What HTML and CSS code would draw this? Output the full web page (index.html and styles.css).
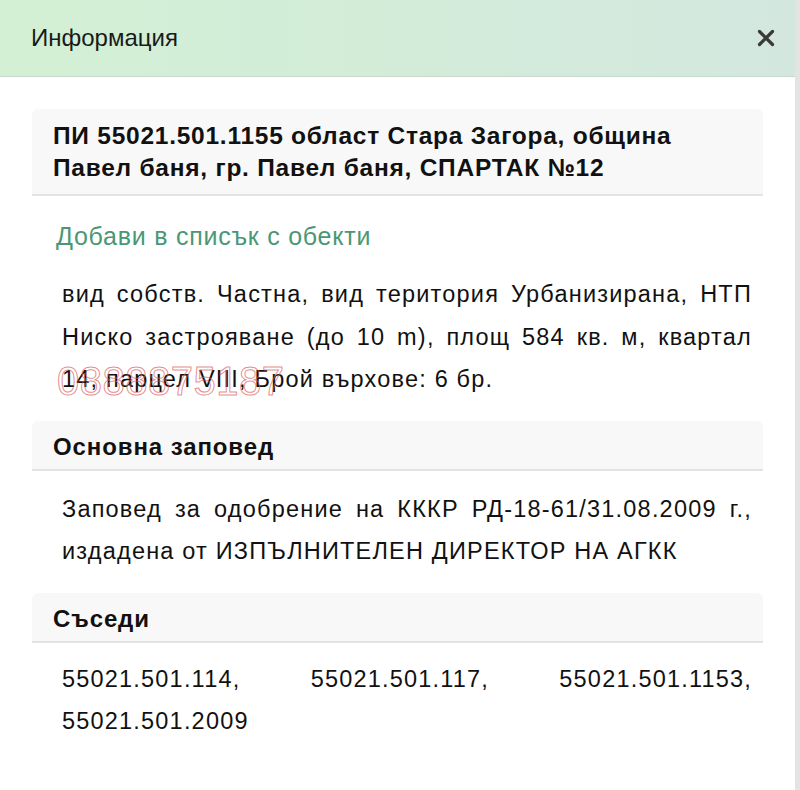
FILE: index.html
```html
<!DOCTYPE html>
<html lang="bg">
<head>
<meta charset="utf-8">
<title>Информация</title>
<link rel="stylesheet" href="styles.css">
</head>
<body>
<div class="modal">
  <header class="modal-header">
    <h1 class="modal-title">Информация</h1>
    <button class="close" aria-label="Затвори">
      <svg width="18" height="18" viewBox="0 0 18 18"><path d="M2.5 2.5 L15.5 15.5 M15.5 2.5 L2.5 15.5" stroke="#3a3a3a" stroke-width="3.2" stroke-linecap="round"/></svg>
    </button>
  </header>
  <div class="modal-body">
    <div class="box-head title-head">ПИ 55021.501.1155 област Стара Загора, община Павел баня, гр. Павел баня, СПАРТАК №12</div>
    <a class="add-link">Добави в списък с обекти</a>
    <div class="wm-wrap">
      <p class="text">вид собств. Частна, вид територия Урбанизирана, НТП Ниско застрояване (до 10 m), площ 584 кв. м, квартал 14, парцел VIII, Брой върхове: 6 бр.</p>
      <span class="watermark">0888875187</span>
    </div>
    <div class="box-head section-head">Основна заповед</div>
    <p class="text">Заповед за одобрение на КККР РД-18-61/31.08.2009 г., издадена от ИЗПЪЛНИТЕЛЕН ДИРЕКТОР НА АГКК</p>
    <div class="box-head section-head">Съседи</div>
    <p class="text neighbours">55021.501.114, 55021.501.117, 55021.501.1153, 55021.501.2009</p>
  </div>
</div>
</body>
</html>
```
FILE: styles.css
```css
html, body {
  margin: 0;
  padding: 0;
  background: #ffffff;
}
body {
  font-family: "Liberation Sans", Arial, sans-serif;
  color: #111;
  width: 800px;
  height: 790px;
  overflow: hidden;
}
.modal {
  width: 795px;
  height: 790px;
  border-right: 5px solid #e4e4e4;
  background: #fff;
}
.modal-header {
  height: 76px;
  border-bottom: 1.5px solid #c9d9cd;
  background: linear-gradient(90deg, #d3f0d4 0%, #d2ecd9 50%, #d3e7df 100%);
  display: flex;
  align-items: center;
  justify-content: space-between;
  padding: 0 20px 0 31px;
}
.modal-title {
  margin: 0;
  font-weight: normal;
  font-size: 24px;
  color: #1a1a1a;
}
.close {
  border: 0;
  background: none;
  padding: 0;
  width: 18px;
  height: 18px;
  display: flex;
}
.modal-body {
  padding: 32px 32px 0 32px;
}
.box-head {
  background: #f8f8f8;
  border-bottom: 2px solid #e2e3e6;
  border-radius: 6px 6px 0 0;
  font-weight: bold;
  font-size: 24px;
  letter-spacing: 0.9px;
  color: #111;
}
.title-head {
  font-size: 24.5px;
  letter-spacing: 0.75px;
  line-height: 32px;
  padding: 11px 21px 10px 21px;
}
.section-head {
  line-height: 28px;
  padding: 12px 21px 8px 21px;
  margin-top: 20px;
}
.add-link {
  display: block;
  color: #4b9775;
  font-size: 25px;
  letter-spacing: 0.75px;
  line-height: 30px;
  margin: 25px 0 0 24px;
}
.text {
  margin: 0;
  font-size: 23.5px;
  letter-spacing: 1.2px;
  line-height: 42.5px;
  text-align: justify;
  padding: 0 11px 0 30px;
  color: #111;
}
.wm-wrap {
  position: relative;
  margin-top: 22px;
}
.section-head + .text {
  margin-top: 17px;
}
.section-head + .neighbours {
  margin-top: 15px;
}
.watermark {
  position: absolute;
  left: 25px;
  top: 88px;
  font-size: 40px;
  line-height: 40px;
  color: transparent;
  -webkit-text-stroke: 1px rgba(220, 90, 90, 0.7);
  letter-spacing: 0.5px;
  pointer-events: none;
}
```
